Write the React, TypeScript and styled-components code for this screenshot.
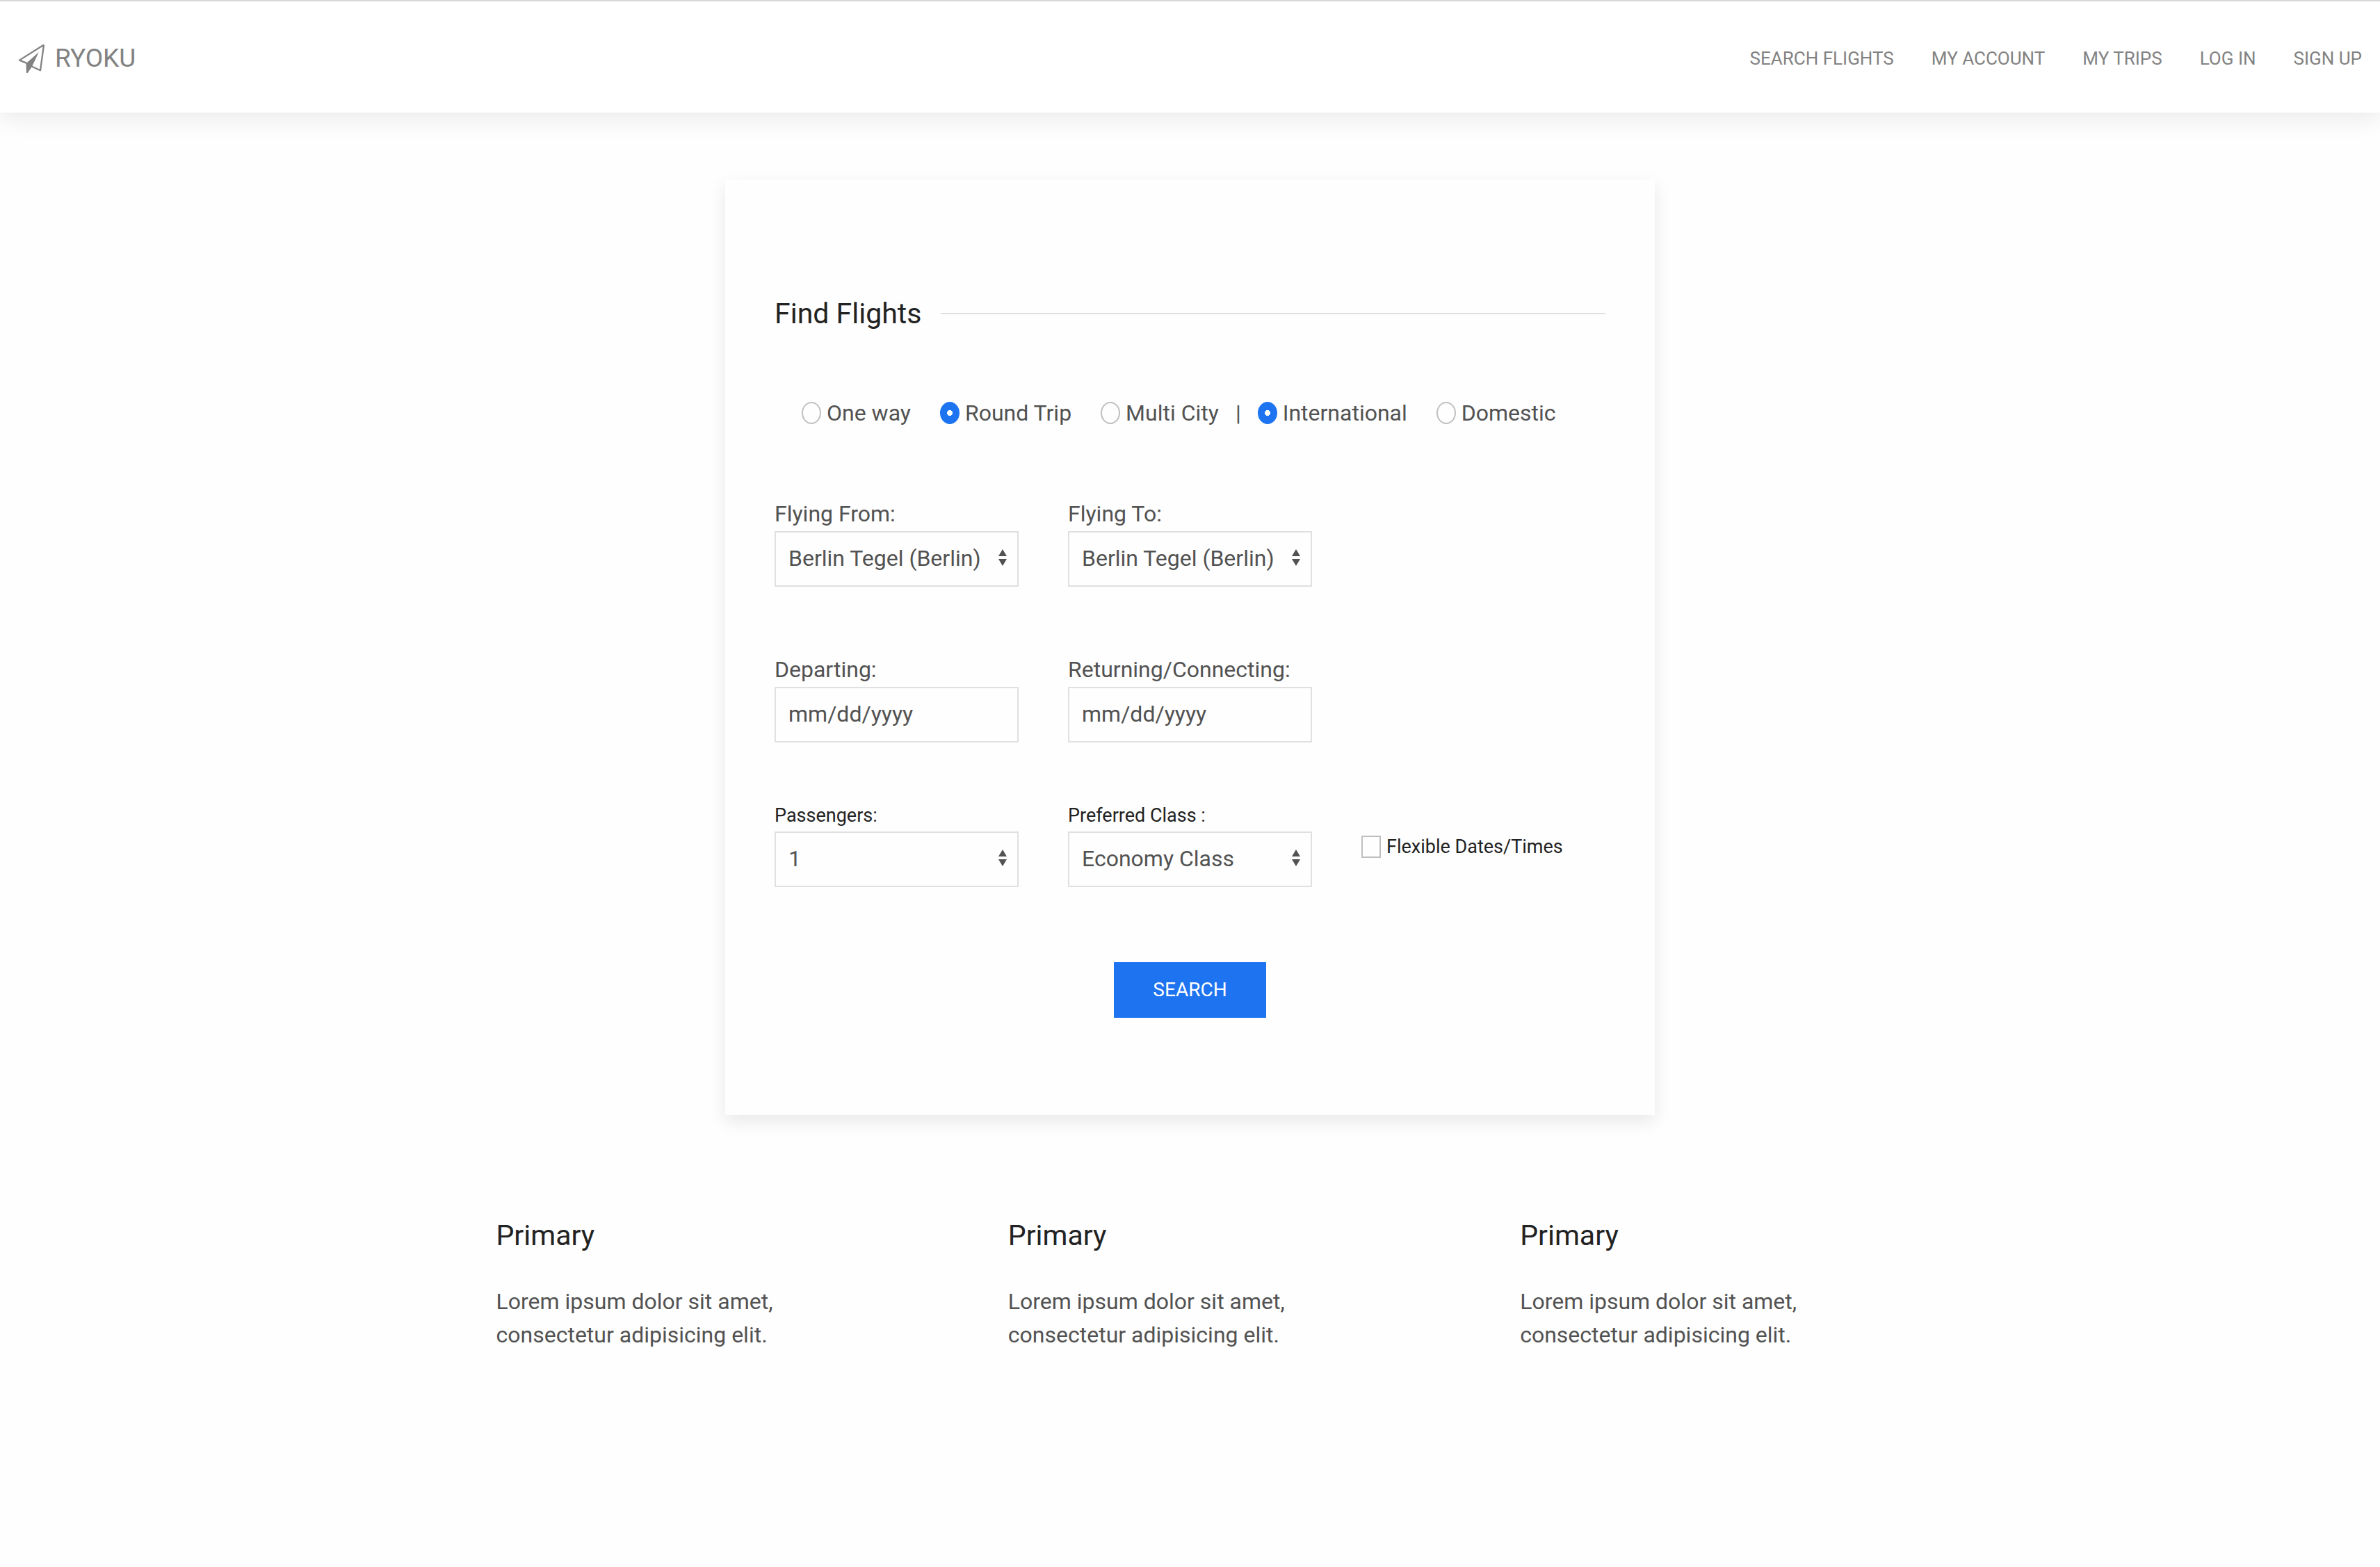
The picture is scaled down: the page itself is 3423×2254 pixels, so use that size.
import React, { useId, useState } from "react";
import styled, { createGlobalStyle } from "styled-components";

const color = {
  page: "#fefefe",
  text: "#525252",
  heading: "#222",
  muted: "#828282",
  line: "#e0e0e0",
  controlLine: "#bfbfbf",
  primary: "#1e74f0",
};

const GlobalStyle = createGlobalStyle`
  *, *::before, *::after { box-sizing: border-box; }
  body {
    margin: 0;
    background: ${color.page};
    color: ${color.text};
    font: 400 32px/48px Roboto, "Liberation Sans", sans-serif;
  }
`;

const Header = styled.header`
  position: relative;
  display: flex;
  align-items: center;
  justify-content: space-between;
  min-height: 162px;
  padding: 4px 26px 0;
  border-top: 2px solid #d8d8d8;
  background: #fff;
  box-shadow: 0 10px 30px rgba(0, 0, 0, 0.08);
`;

const Brand = styled.a`
  display: flex;
  align-items: center;
  gap: 14px;
  color: ${color.muted};
  font-size: 37px;
  text-decoration: none;
`;

const Nav = styled.nav`
  display: flex;
  flex-wrap: wrap;
  gap: 54px;
`;

const NavLink = styled.a`
  color: ${color.muted};
  font-size: 26px;
  text-decoration: none;
  text-transform: uppercase;
`;

const Main = styled.main`
  display: flex;
  flex-direction: column;
  align-items: center;
  padding: 96px 0;
`;

const SearchCard = styled.form`
  width: 100%;
  max-width: 1337px;
  padding: 160px 71px 140px;
  background: ${color.page};
  box-shadow: 0 9px 24px rgba(0, 0, 0, 0.09);
`;

const Title = styled.h3`
  margin: 0;
  color: ${color.heading};
  font-size: 41px;
  font-weight: 400;
  line-height: 66px;
`;

const LinedTitle = styled(Title)`
  display: flex;
  align-items: center;
  gap: 28px;

  &::after {
    content: "";
    flex: 1;
    height: 2px;
    background: ${color.line};
  }
`;

const TripOptions = styled.div`
  display: flex;
  flex-wrap: wrap;
  margin-top: 86px;
  padding-left: 39px;
`;

const RadioGroup = styled.div`
  display: flex;
  gap: 42px;
`;

const Separator = styled.span`
  margin: 0 24px;
`;

const Choice = styled.label<{ $small?: boolean }>`
  display: flex;
  align-items: center;
  gap: 8px;
  ${(p) => p.$small && `color: ${color.heading}; font-size: 27px; line-height: 44px;`}
`;

const Tick = styled.input`
  appearance: none;
  flex: none;
  width: 28px;
  height: 32px;
  margin: 0;
  border: 2px solid ${color.controlLine};
  background: transparent;

  &[type="radio"] {
    border-radius: 50%;
  }

  &:checked {
    border-color: ${color.primary};
    background: radial-gradient(4px 4px, #fff 95%, ${color.primary});
  }
`;

const FieldRow = styled.div<{ $space: number }>`
  display: grid;
  grid-template-columns: repeat(3, minmax(0, 1fr));
  column-gap: 71px;
  margin-top: ${(p) => p.$space}px;
`;

const Label = styled.label<{ $small?: boolean }>`
  display: block;
  padding-bottom: 2px;
  line-height: 46px;
  ${(p) => p.$small && `color: ${color.heading}; font-size: 27px; line-height: 42px;`}
`;

const fieldBox = `
  appearance: none;
  display: block;
  width: 100%;
  height: 80px;
  margin: 0;
  padding: 0 18px 2px;
  border: 2px solid ${color.line};
  border-radius: 0;
  background: transparent;
  color: inherit;
  font: inherit;
`;

const TextBox = styled.input`
  ${fieldBox}
  &::placeholder {
    color: inherit;
    opacity: 1;
  }
`;

const SelectFrame = styled.div`
  position: relative;
`;

const SelectBox = styled.select`
  ${fieldBox}
`;

const Arrows = styled.svg`
  position: absolute;
  top: 26px;
  right: 17px;
  width: 12px;
  height: 24px;
  fill: ${color.text};
  pointer-events: none;
`;

const FlexibleCell = styled.div`
  padding-top: 44px;
`;

const Actions = styled.div`
  display: flex;
  justify-content: center;
  margin-top: 108px;
`;

const SubmitButton = styled.button`
  height: 80px;
  padding: 0 56px;
  border: 0;
  background: ${color.primary};
  color: #fff;
  font: inherit;
  font-size: 28px;
  text-transform: uppercase;
`;

const Features = styled.section`
  display: grid;
  grid-template-columns: repeat(3, minmax(0, 1fr));
  gap: 71px;
  width: 100%;
  max-width: 2138px;
  margin-top: 140px;
`;

const Feature = styled.article`
  padding: 0 71px;
`;

const FeatureText = styled.p`
  margin: 38px 0 0;
`;

function PaperPlane() {
  return (
    <svg width="39" height="44" viewBox="78 62 118 132" aria-hidden="true">
      <path
        d="M190 69 84 136l32 13M190 69l-15 111-38-17"
        fill="none"
        stroke={color.muted}
        strokeWidth="7"
        strokeLinejoin="round"
      />
      <path d="M168 101 113 150l1 41 5 1 20-29Z" fill={color.muted} />
    </svg>
  );
}

function SelectField(props: { label: string; options: string[]; small?: boolean }) {
  const id = useId();
  return (
    <div>
      <Label htmlFor={id} $small={props.small}>
        {props.label}
      </Label>
      <SelectFrame>
        <SelectBox id={id}>
          {props.options.map((option) => (
            <option key={option}>{option}</option>
          ))}
        </SelectBox>
        <Arrows viewBox="0 0 12 24">
          <path d="M6 0l6 10H0ZM0 14h12L6 24Z" />
        </Arrows>
      </SelectFrame>
    </div>
  );
}

function DateField(props: { label: string }) {
  const id = useId();
  return (
    <div>
      <Label htmlFor={id}>{props.label}</Label>
      <TextBox id={id} type="text" placeholder="mm/dd/yyyy" />
    </div>
  );
}

function Radios(props: { name: string; options: string[]; initial: string }) {
  const [value, setValue] = useState(props.initial);
  return (
    <RadioGroup role="radiogroup">
      {props.options.map((option) => (
        <Choice key={option}>
          <Tick
            type="radio"
            name={props.name}
            checked={value === option}
            onChange={() => setValue(option)}
          />
          {option}
        </Choice>
      ))}
    </RadioGroup>
  );
}

const links = ["Search Flights", "My Account", "My Trips", "Log In", "Sign Up"];
const airports = ["Berlin Tegel (Berlin)"];

export default function App() {
  return (
    <>
      <GlobalStyle />
      <Header>
        <Brand href="#">
          <PaperPlane />
          RYOKU
        </Brand>
        <Nav>
          {links.map((link) => (
            <NavLink key={link} href="#">
              {link}
            </NavLink>
          ))}
        </Nav>
      </Header>
      <Main>
        <SearchCard onSubmit={(e) => e.preventDefault()}>
          <LinedTitle>Find Flights</LinedTitle>
          <TripOptions>
            <Radios name="trip" options={["One way", "Round Trip", "Multi City"]} initial="Round Trip" />
            <Separator>|</Separator>
            <Radios name="area" options={["International", "Domestic"]} initial="International" />
          </TripOptions>
          <FieldRow $space={98}>
            <SelectField label="Flying From:" options={airports} />
            <SelectField label="Flying To:" options={airports} />
          </FieldRow>
          <FieldRow $space={96}>
            <DateField label="Departing:" />
            <DateField label="Returning/Connecting:" />
          </FieldRow>
          <FieldRow $space={84}>
            <SelectField label="Passengers:" options={["1"]} small />
            <SelectField label="Preferred Class :" options={["Economy Class"]} small />
            <FlexibleCell>
              <Choice $small>
                <Tick type="checkbox" />
                Flexible Dates/Times
              </Choice>
            </FlexibleCell>
          </FieldRow>
          <Actions>
            <SubmitButton type="submit">Search</SubmitButton>
          </Actions>
        </SearchCard>
        <Features>
          {[1, 2, 3].map((n) => (
            <Feature key={n}>
              <Title>Primary</Title>
              <FeatureText>Lorem ipsum dolor sit amet, consectetur adipisicing elit.</FeatureText>
            </Feature>
          ))}
        </Features>
      </Main>
    </>
  );
}
